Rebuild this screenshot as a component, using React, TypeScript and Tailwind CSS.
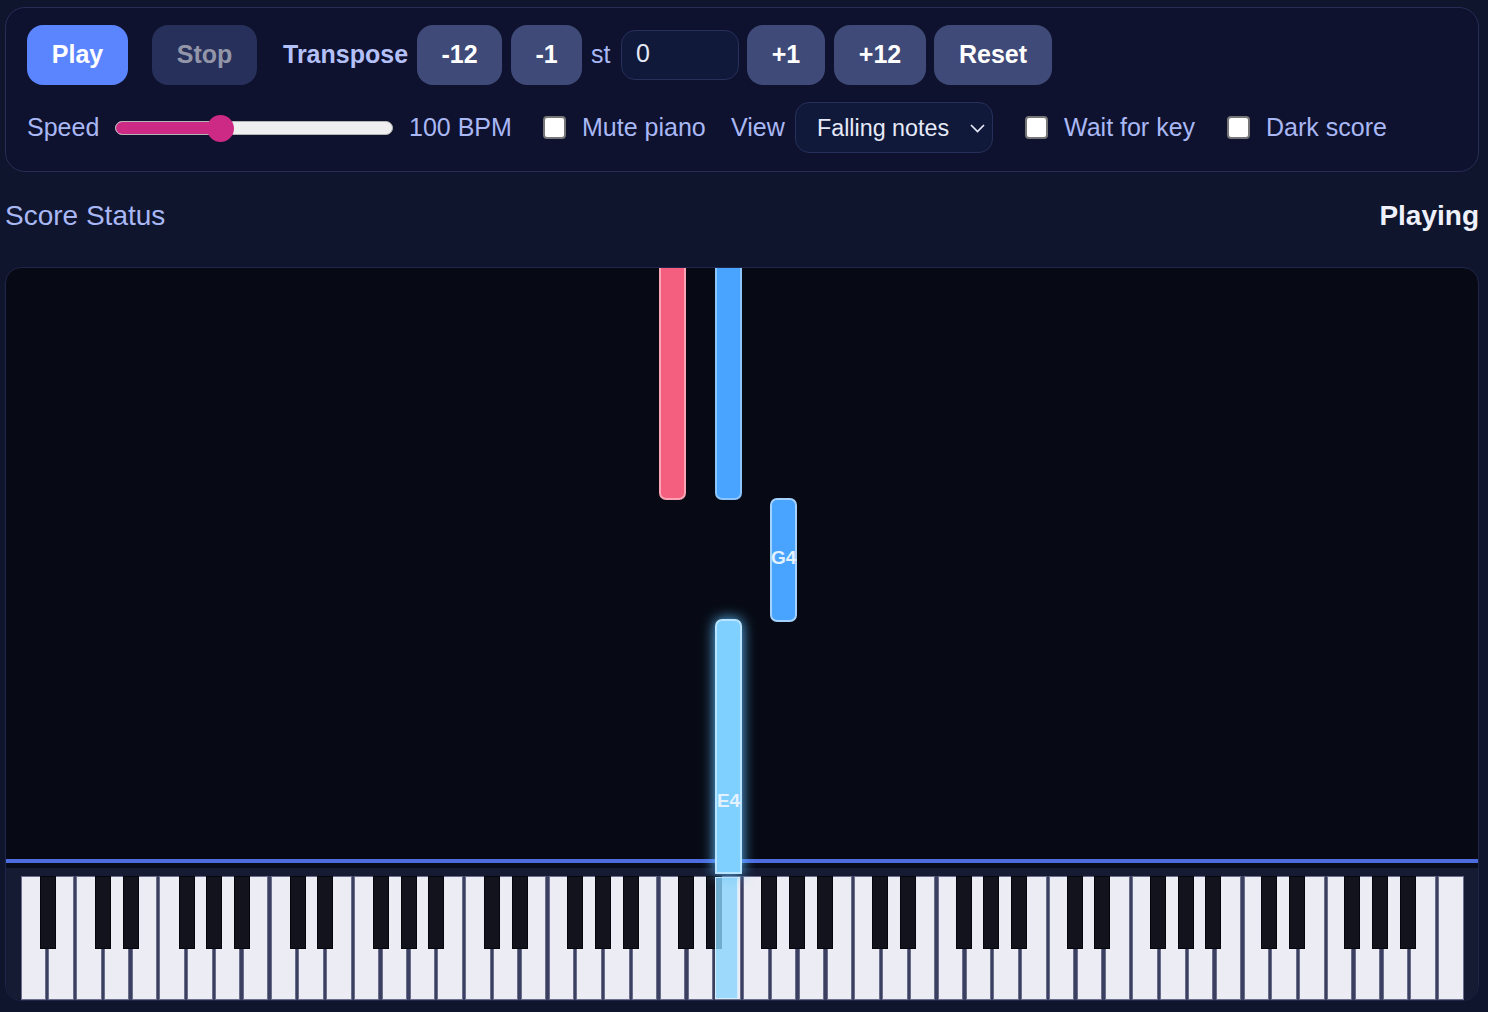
const font = "font-['Liberation_Sans',Arial,sans-serif]";

const KEY_W = 27.75;
const WHITE_COUNT = 52;

// white key index -> has a black key on its right (starts on A)
const hasBlack = (i: number) => {
  const n = i % 7;
  return n !== 1 && n !== 4 && i !== WHITE_COUNT - 1;
};

const notes = [
  { key: 23, top: -40, height: 272, color: "bg-[#f45f7f] border-[#f9a3b5]", label: "" },
  { key: 25, top: -40, height: 272, color: "bg-[#48a4ff] border-[#8cc5fb]", label: "" },
  { key: 27, top: 230, height: 124, color: "bg-[#48a4ff] border-[#a5d2fb]", label: "G4" },
];

function Btn({ children, className }: { children: string; className: string }) {
  return (
    <button className={`h-[60px] rounded-[16px] text-[25px] font-bold ${className}`}>{children}</button>
  );
}

function Check({ label, className }: { label: string; className: string }) {
  return (
    <label className={`flex items-center gap-[16px] ${className}`}>
      <input
        type="checkbox"
        className="h-[23px] w-[23px] appearance-none rounded-[4px] border-2 border-[#767676] bg-white"
      />
      <span>{label}</span>
    </label>
  );
}

export default function App() {
  const white = Array.from({ length: WHITE_COUNT }, (_, i) => i);

  return (
    <div className={`${font} h-[1012px] overflow-hidden bg-[#0f152d] pl-[5px] pr-[9px] pt-[7px] text-[#a9b8f5]`}>
      {/* Controls */}
      <div className="h-[165px] rounded-[20px] border border-[#272d55] bg-[#0e122e] px-[21px] pt-[17px]">
        <div className="flex items-center">
          <Btn className="w-[101px] bg-[#5b84ff] text-white">Play</Btn>
          <Btn className="ml-[24px] w-[105px] bg-[#27305a] text-[#9296a8]">Stop</Btn>
          <span className="ml-[26px] w-[134px] text-[25px] font-bold text-[#b4c0f8]">Transpose</span>
          <Btn className="w-[85px] bg-[#3f4a78] text-white">-12</Btn>
          <Btn className="ml-[9px] w-[71px] bg-[#3f4a78] text-white">-1</Btn>
          <span className="ml-[9px] w-[30px] text-[25px]">st</span>
          <input
            readOnly
            value="0"
            className="h-[50px] w-[118px] rounded-[14px] border border-[#272f5c] bg-[#10193a] px-[14px] pb-[3px] text-[25px] text-[#e6e9f8] outline-none"
          />
          <Btn className="ml-[8px] w-[78px] bg-[#3f4a78] text-white">+1</Btn>
          <Btn className="ml-[9px] w-[92px] bg-[#3f4a78] text-white">+12</Btn>
          <Btn className="ml-[8px] w-[118px] bg-[#3f4a78] text-white">Reset</Btn>
        </div>

        <div className="mt-[17px] flex h-[51px] items-center text-[25px]">
          <span className="w-[88px]">Speed</span>
          <div className="relative h-[14px] w-[278px] rounded-full border border-[#b4b4b4] bg-[#efefef]">
            <div className="h-full w-[105px] rounded-full bg-[#cc2a84]" />
            <div className="absolute left-[91px] top-[-7px] h-[27px] w-[27px] rounded-full bg-[#cc2a84]" />
          </div>
          <span className="ml-[16px] w-[134px]">100 BPM</span>
          <Check label="Mute piano" className="w-[188px]" />
          <span className="w-[64px]">View</span>
          <div className="relative h-[51px] w-[198px]">
            <select className="h-full w-full appearance-none rounded-[14px] border border-[#272f5c] bg-[#10193a] pl-[21px] pt-[2px] text-[23.3px] text-[#e6e9f8] outline-none">
              <option>Falling notes</option>
            </select>
            <svg className="absolute left-[174px] top-[20px] h-[12px] w-[17px]" viewBox="0 0 17 12" fill="none" stroke="#e6e9f8" strokeWidth="1.7">
              <path d="M2 3l6.5 6.5L15 3" />
            </svg>
          </div>
          <Check label="Wait for key" className="ml-[32px] w-[202px]" />
          <Check label="Dark score" className="" />
        </div>
      </div>

      {/* Status */}
      <div className="flex h-[95px] items-center justify-between pb-[7px] text-[28px]">
        <span>Score Status</span>
        <span className="font-bold text-[#eef0fa]">Playing</span>
      </div>

      {/* Stage */}
      <div className="relative flex h-[734px] flex-col overflow-hidden rounded-[16px] border border-[#20264a] bg-[#070a14]">
        <div className="relative h-[591px] shrink-0">
          {notes.map((n) => (
            <div
              key={n.key}
              className={`absolute flex w-[27px] items-center justify-center rounded-[7px] border-2 pb-[3px] text-[19px] font-bold text-[#e4f1ff] ${n.color}`}
              style={{ left: n.key * KEY_W + 15, top: n.top, height: n.height }}
            >
              {n.label}
            </div>
          ))}
        </div>

        <div className="h-[4px] shrink-0 bg-[#4d6ce0]" />
        <div className="h-[5px] shrink-0 bg-[#090c1a]" />

        <div className="relative flex-1 bg-[#151b33] pl-[14.5px] pr-[14.5px] pt-[8px]">
          <div className="relative flex h-full gap-[2.4px] bg-[#3b4060]">
            {white.map((i) => (
              <div key={i} className="flex-1 border border-[#6a6e8a] bg-[#ebecf4]" />
            ))}
            {white.filter(hasBlack).map((i) => (
              <div
                key={i}
                className="absolute top-0 h-[73px] w-[16px] border border-[#05060b] bg-[#12131c]"
                style={{ left: (i + 1) * KEY_W - 8.5 }}
              />
            ))}
            {/* pressed E4 */}
            <div
              className="absolute top-[1px] bottom-[1px] w-[23px] border-[1.5px] border-[#d5eeff] bg-[#8ad4fb]/80"
              style={{ left: 25 * KEY_W + 1 }}
            />
          </div>
        </div>

        {/* E4 note, active, runs over the hit line */}
        <div
          className="absolute flex w-[27px] items-end justify-center rounded-t-[7px] border-2 border-[#b9e4ff] bg-[#7fd0ff] pb-[57px] text-[19px] font-bold text-[#e4f1ff] shadow-[0_0_14px_#5fbfff]"
          style={{ left: 709, top: 351, height: 255 }}
        >
          E4
        </div>
      </div>
    </div>
  );
}
